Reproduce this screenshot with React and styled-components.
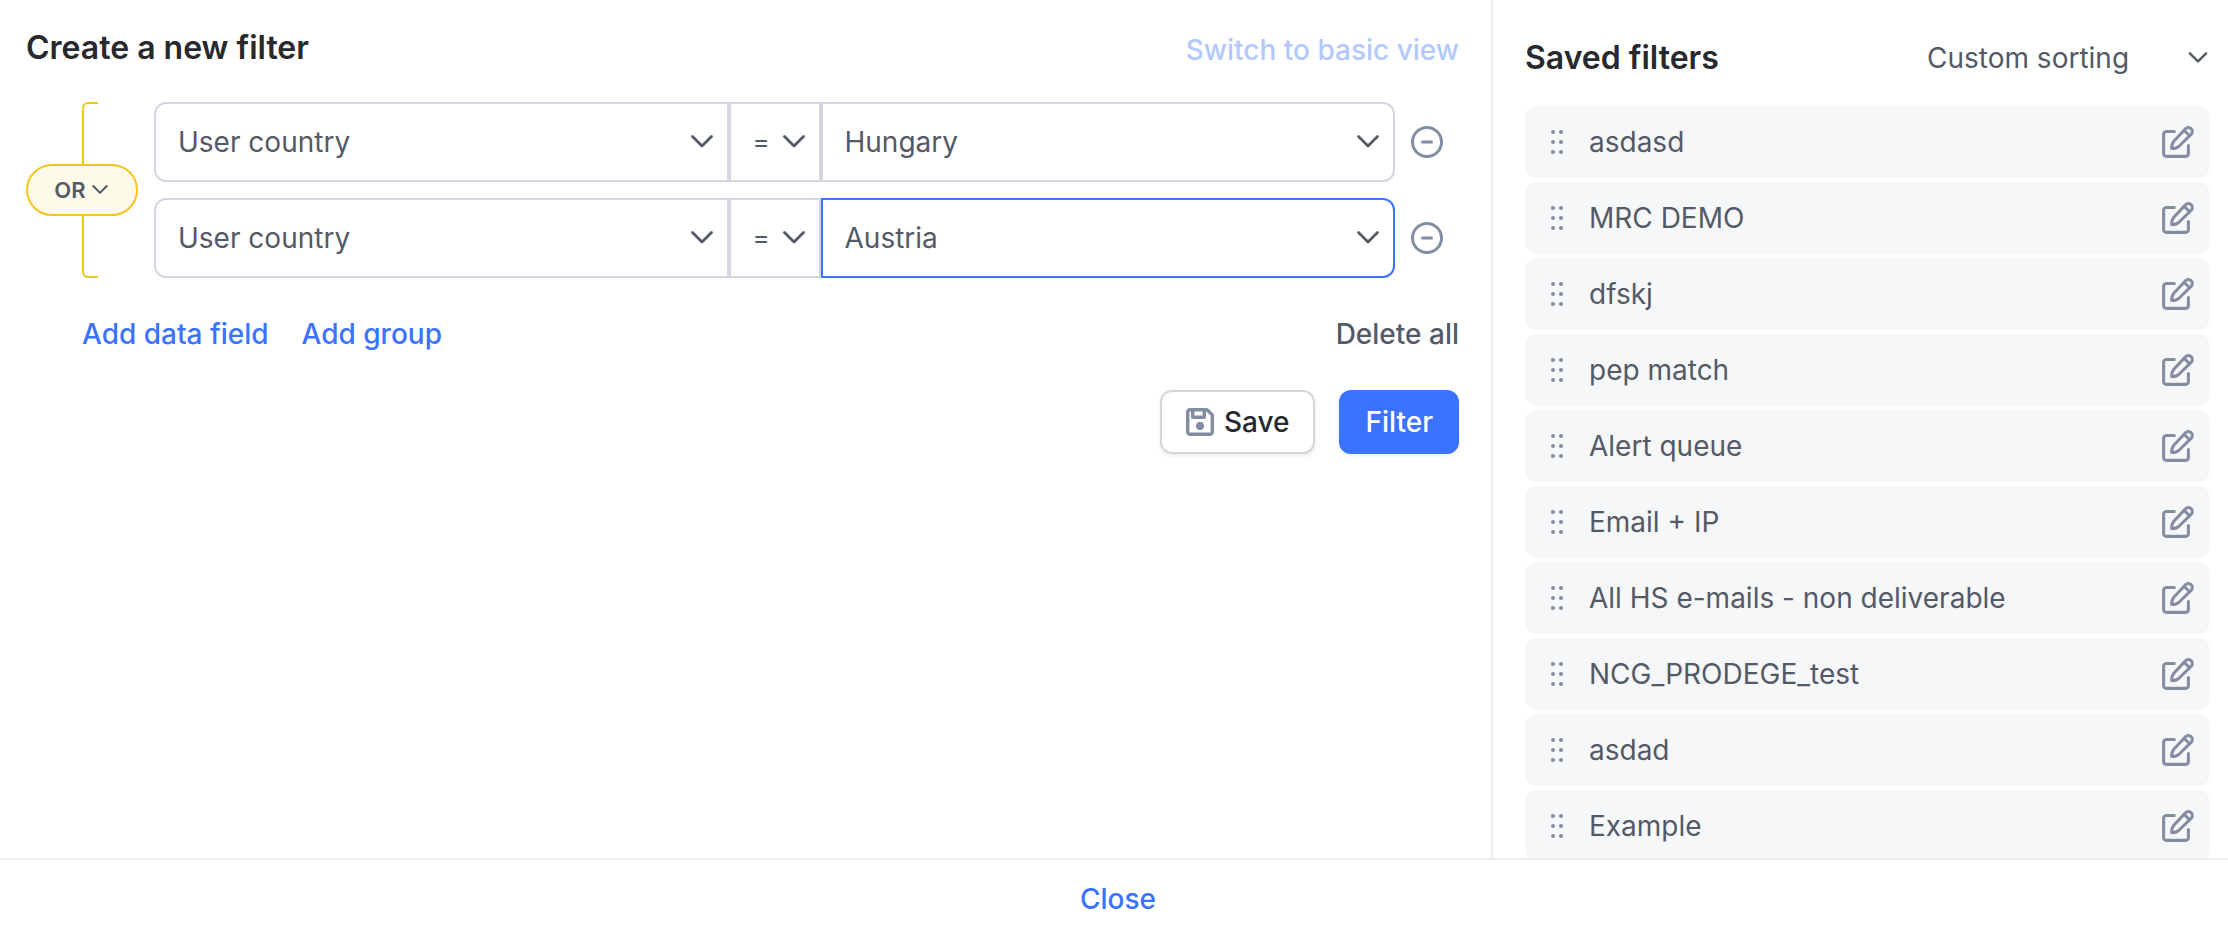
import React, { useState } from 'react';
import styled, { createGlobalStyle, css } from 'styled-components';

const GlobalStyle = createGlobalStyle`
  * {
    box-sizing: border-box;
  }

  body {
    margin: 0;
    background: #fff;
    color: #535a66;
    font-family: Inter, "Liberation Sans", sans-serif;
    font-size: 28px;
    line-height: 40px;
  }

  button,
  select {
    margin: 0;
    padding: 0;
    border: 0;
    background: none;
    color: inherit;
    font: inherit;
    cursor: pointer;
  }
`;

const Page = styled.div`
  display: flex;
  flex-direction: column;
  height: 100vh;
`;

const Body = styled.div`
  display: flex;
  flex: 1;
  min-height: 0;
`;

const Builder = styled.main`
  flex: 1;
  min-width: 0;
  padding: 26px 32px 26px 26px;
`;

const BuilderHeader = styled.header`
  display: flex;
  align-items: flex-start;
  justify-content: space-between;
  height: 76px;
`;

const Title = styled.h2`
  margin: 0;
  color: #27292e;
  font-size: 32px;
  font-weight: 600;
  line-height: 44px;
`;

const LinkButton = styled.button`
  color: ${props => props.$color || '#3b72ff'};
  font-weight: 500;
  line-height: 48px;

  &:disabled {
    color: #b3c8ff;
    cursor: default;
  }
`;

const Group = styled.div`
  display: flex;
  align-items: stretch;
  gap: 16px;
`;

const Connector = styled.div`
  display: grid;
  width: 112px;
  align-items: center;
`;

const Bracket = styled.div`
  grid-area: 1 / 1;
  align-self: stretch;
  width: 16px;
  margin-left: 56px;
  border: 2px solid #f2c61f;
  border-right: 0;
  border-radius: 6px 0 0 6px;
`;

const ConnectorButton = styled.button`
  display: flex;
  grid-area: 1 / 1;
  align-items: center;
  justify-content: center;
  gap: 4px;
  height: 52px;
  border: 2px solid #f2c61f;
  border-radius: 26px;
  background: #fefae9;
  font-size: 22px;
  font-weight: 600;
  z-index: 1;
`;

const Rules = styled.div`
  display: flex;
  flex: 1;
  flex-direction: column;
  gap: 16px;
  padding-right: 16px;
`;

const Rule = styled.div`
  display: flex;
  align-items: center;
  gap: 16px;
`;

const Fields = styled.div`
  display: flex;
  flex: 1;
`;

const Field = styled.div`
  display: grid;
  flex: ${props => (props.$narrow ? '0 0 92px' : '1 1 0')};
  align-items: center;
  min-width: 0;

  > svg {
    grid-area: 1 / 1;
    justify-self: end;
    margin-right: 13px;
    pointer-events: none;
  }
`;

const Select = styled.select`
  grid-area: 1 / 1;
  width: 100%;
  height: 80px;
  padding: 0 64px 0 22px;
  border: 2px solid #d4d7e3;
  appearance: none;
  outline: none;

  ${Field}:first-child & {
    border-radius: 12px 0 0 12px;
  }

  ${Field}:last-child & {
    border-radius: 0 12px 12px 0;
  }

  ${props =>
    props.$narrow &&
    css`
      padding: 0 40px 0 22px;
      font-size: 26px;
    `}

  ${props =>
    props.$active &&
    css`
      border-color: #3b72ff;
    `}
`;

const IconButton = styled.button`
  display: flex;
  color: #838ca1;
`;

const GroupActions = styled.div`
  display: flex;
  gap: 33px;
  padding: 32px 0 32px 56px;

  > :last-child {
    margin-left: auto;
  }
`;

const Submit = styled.div`
  display: flex;
  justify-content: flex-end;
  gap: 24px;
`;

const Button = styled.button`
  display: flex;
  align-items: center;
  gap: 10px;
  height: 64px;
  padding: 0 24px;
  border: 2px solid ${props => (props.$primary ? '#3b72ff' : '#d5d6d9')};
  border-radius: 12px;
  background: ${props => (props.$primary ? '#3b72ff' : '#fff')};
  box-shadow: 0 2px 4px rgba(0, 0, 0, 0.08);
  color: ${props => (props.$primary ? '#fff' : '#27292e')};
  font-weight: 500;

  svg {
    color: #838ca1;
  }
`;

const Sidebar = styled.aside`
  display: flex;
  flex: 0 0 737px;
  flex-direction: column;
  padding: 36px 18px 0 32px;
  border-left: 2px solid #ebecf1;
  overflow: hidden;
`;

const SidebarHeader = styled.header`
  display: flex;
  flex: none;
  justify-content: space-between;
  height: 70px;
`;

const Sorting = styled.div`
  display: grid;
  width: 283px;
  height: 44px;
  align-items: center;

  > svg {
    grid-area: 1 / 1;
    justify-self: end;
    pointer-events: none;
  }
`;

const SortingSelect = styled.select`
  grid-area: 1 / 1;
  width: 100%;
  appearance: none;
  outline: none;
`;

const List = styled.ul`
  display: flex;
  flex-direction: column;
  gap: 4px;
  margin: 0;
  padding: 0;
  list-style: none;
`;

const Item = styled.li`
  display: flex;
  flex: none;
  align-items: center;
  height: 72px;
  padding: 0 16px 0 26px;
  border-radius: 12px;
  background: #f6f7f9;
`;

const ItemName = styled.span`
  flex: 1;
  margin-left: 26px;
`;

const Footer = styled.footer`
  display: flex;
  flex: none;
  align-items: center;
  justify-content: center;
  height: 76px;
  padding: 4px 0 0 8px;
  border-top: 2px solid #ebecf1;
`;

const Chevron = ({ size = 28 }) => (
  <svg width={size} height={size} viewBox="0 0 28 28" fill="none" aria-hidden="true">
    <path
      d="M4.500 8.500 14 18l9.500-9.500"
      stroke="currentColor"
      strokeWidth="2.8"
      strokeLinecap="round"
      strokeLinejoin="round"
    />
  </svg>
);

const MinusIcon = () => (
  <svg width="32" height="32" viewBox="0 0 32 32" fill="none" aria-hidden="true">
    <circle cx="16" cy="16" r="14.500" stroke="currentColor" strokeWidth="3" />
    <path d="M11.500 16h9" stroke="currentColor" strokeWidth="3" strokeLinecap="round" />
  </svg>
);

const SaveIcon = () => (
  <svg width="28" height="28" viewBox="0 0 28 28" fill="none" aria-hidden="true">
    <path
      d="M4 1.700h17l5.300 5.300V24a2.300 2.300 0 0 1-2.300 2.300H4A2.300 2.300 0 0 1 1.700 24V4A2.300 2.300 0 0 1 4 1.700z"
      stroke="currentColor"
      strokeWidth="3.4"
      strokeLinejoin="round"
    />
    <path d="M6.700 2v7.200h11.600V2" stroke="currentColor" strokeWidth="3.4" strokeLinejoin="round" />
    <circle cx="14" cy="18" r="4" fill="currentColor" />
  </svg>
);

const DragIcon = () => (
  <svg width="12" height="24" viewBox="0 0 12 24" fill="#838ca1" aria-hidden="true">
    {[2, 12, 22].map(y => (
      <React.Fragment key={y}>
        <circle cx="2" cy={y} r="2" />
        <circle cx="10" cy={y} r="2" />
      </React.Fragment>
    ))}
  </svg>
);

const EditIcon = () => (
  <svg
    width="32"
    height="32"
    viewBox="0 0 24 24"
    fill="none"
    stroke="currentColor"
    strokeWidth="2.3"
    strokeLinecap="round"
    strokeLinejoin="round"
    aria-hidden="true"
  >
    <path d="M9.200 4.100H3.400a2.200 2.200 0 0 0-2.200 2.200v14.300a2.200 2.200 0 0 0 2.200 2.200h14.200a2.200 2.200 0 0 0 2.200-2.200v-5.900" />
    <path d="M12.700 15.200C11.500 16.300 9.500 16.800 7.200 16.900c.100-2.300.600-4.300 1.700-5.500l8.700-9.300a2.950 2.950 0 0 1 4.300 4.100z" />
    <path d="m16.700 3.300 4 4" />
  </svg>
);

const fields = ['User country', 'User email', 'User IP'];
const countries = ['Hungary', 'Austria', 'Germany'];

const savedFilters = [
  'asdasd',
  'MRC DEMO',
  'dfskj',
  'pep match',
  'Alert queue',
  'Email + IP',
  'All HS e-mails - non deliverable',
  'NCG_PRODEGE_test',
  'asdad',
  'Example',
];

const options = values => values.map(value => <option key={value}>{value}</option>);

const RuleRow = ({ country, active }) => (
  <Rule>
    <Fields>
      <Field>
        <Select aria-label="Data field">{options(fields)}</Select>
        <Chevron />
      </Field>
      <Field $narrow>
        <Select $narrow aria-label="Operator">
          {options(['=', '≠'])}
        </Select>
        <Chevron />
      </Field>
      <Field>
        <Select $active={active} aria-label="Value" defaultValue={country}>
          {options(countries)}
        </Select>
        <Chevron />
      </Field>
    </Fields>
    <IconButton type="button" aria-label="Remove data field">
      <MinusIcon />
    </IconButton>
  </Rule>
);

const App = () => {
  const [operator, setOperator] = useState('OR');

  return (
    <Page>
      <GlobalStyle />
      <Body>
        <Builder>
          <BuilderHeader>
            <Title>Create a new filter</Title>
            <LinkButton type="button" disabled>
              Switch to basic view
            </LinkButton>
          </BuilderHeader>
          <Group>
            <Connector>
              <Bracket />
              <ConnectorButton
                type="button"
                onClick={() => setOperator(operator === 'OR' ? 'AND' : 'OR')}
              >
                {operator}
                <Chevron size={20} />
              </ConnectorButton>
            </Connector>
            <Rules>
              <RuleRow country="Hungary" />
              <RuleRow country="Austria" active />
            </Rules>
          </Group>
          <GroupActions>
            <LinkButton type="button">Add data field</LinkButton>
            <LinkButton type="button">Add group</LinkButton>
            <LinkButton type="button" $color="#535a66">
              Delete all
            </LinkButton>
          </GroupActions>
          <Submit>
            <Button type="button">
              <SaveIcon />
              Save
            </Button>
            <Button type="button" $primary>
              Filter
            </Button>
          </Submit>
        </Builder>
        <Sidebar>
          <SidebarHeader>
            <Title>Saved filters</Title>
            <Sorting>
              <SortingSelect aria-label="Sorting">
                {options(['Custom sorting', 'By name', 'By date'])}
              </SortingSelect>
              <Chevron size={24} />
            </Sorting>
          </SidebarHeader>
          <List>
            {savedFilters.map(name => (
              <Item key={name}>
                <DragIcon />
                <ItemName>{name}</ItemName>
                <IconButton type="button" aria-label={`Edit ${name}`}>
                  <EditIcon />
                </IconButton>
              </Item>
            ))}
          </List>
        </Sidebar>
      </Body>
      <Footer>
        <LinkButton type="button">Close</LinkButton>
      </Footer>
    </Page>
  );
};

export default App;
